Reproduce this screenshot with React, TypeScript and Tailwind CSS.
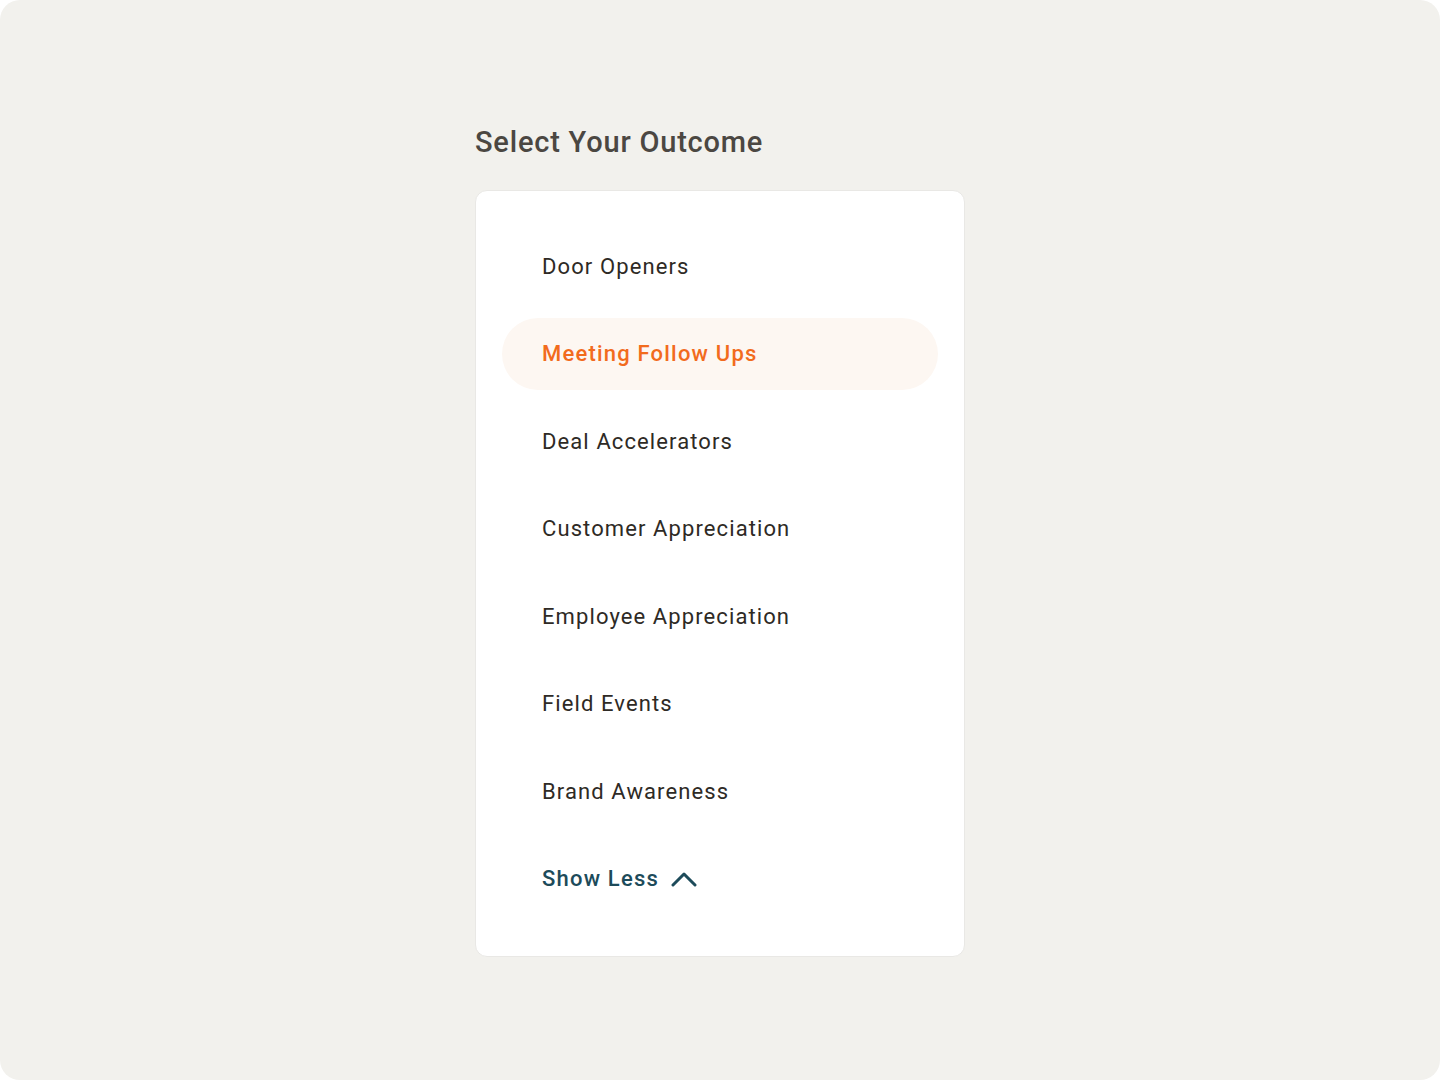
const outcomes = [
  'Door Openers',
  'Meeting Follow Ups',
  'Deal Accelerators',
  'Customer Appreciation',
  'Employee Appreciation',
  'Field Events',
  'Brand Awareness',
];

export default function App() {
  const selected = 'Meeting Follow Ups';

  return (
    <div className="w-[1440px] h-[1080px] bg-white">
      <div
        className="w-full h-full rounded-[20px] bg-[#f2f1ed] flex flex-col items-center pt-[124px]"
        style={{ fontFamily: 'Roboto, "Noto Sans", sans-serif' }}
      >
        <div className="w-[490px]">
          <h1 className="text-[29px] leading-[36px] font-medium text-[#4b4742] tracking-[0.8px]">
            Select Your Outcome
          </h1>

          <div className="mt-[30px] bg-white border border-[#e9e8e5] rounded-[12px] px-[26px] pt-[39px] pb-[41px] flex flex-col gap-[15.5px]">
            {outcomes.map((item) => {
              const active = item === selected;
              return (
                <div
                  key={item}
                  className={
                    active
                      ? 'h-[72px] rounded-full bg-[#fdf7f2] flex items-center pl-[40px] text-[22px] font-medium text-[#f26b1d] tracking-[1.2px]'
                      : 'h-[72px] rounded-full flex items-center pl-[40px] text-[22px] text-[#2e2a25] tracking-[1.1px]'
                  }
                >
                  {item}
                </div>
              );
            })}

            <div className="h-[72px] flex items-center pl-[40px] gap-[12px] text-[22px] font-medium text-[#1d4b5a] tracking-[1.2px]">
              <span>Show Less</span>
              <svg width="26" height="16" viewBox="0 0 26 16" fill="none">
                <polyline
                  points="2,14 13,3 24,14"
                  stroke="#1d4b5a"
                  strokeWidth="3"
                  strokeLinecap="round"
                  strokeLinejoin="round"
                />
              </svg>
            </div>
          </div>
        </div>
      </div>
    </div>
  );
}
